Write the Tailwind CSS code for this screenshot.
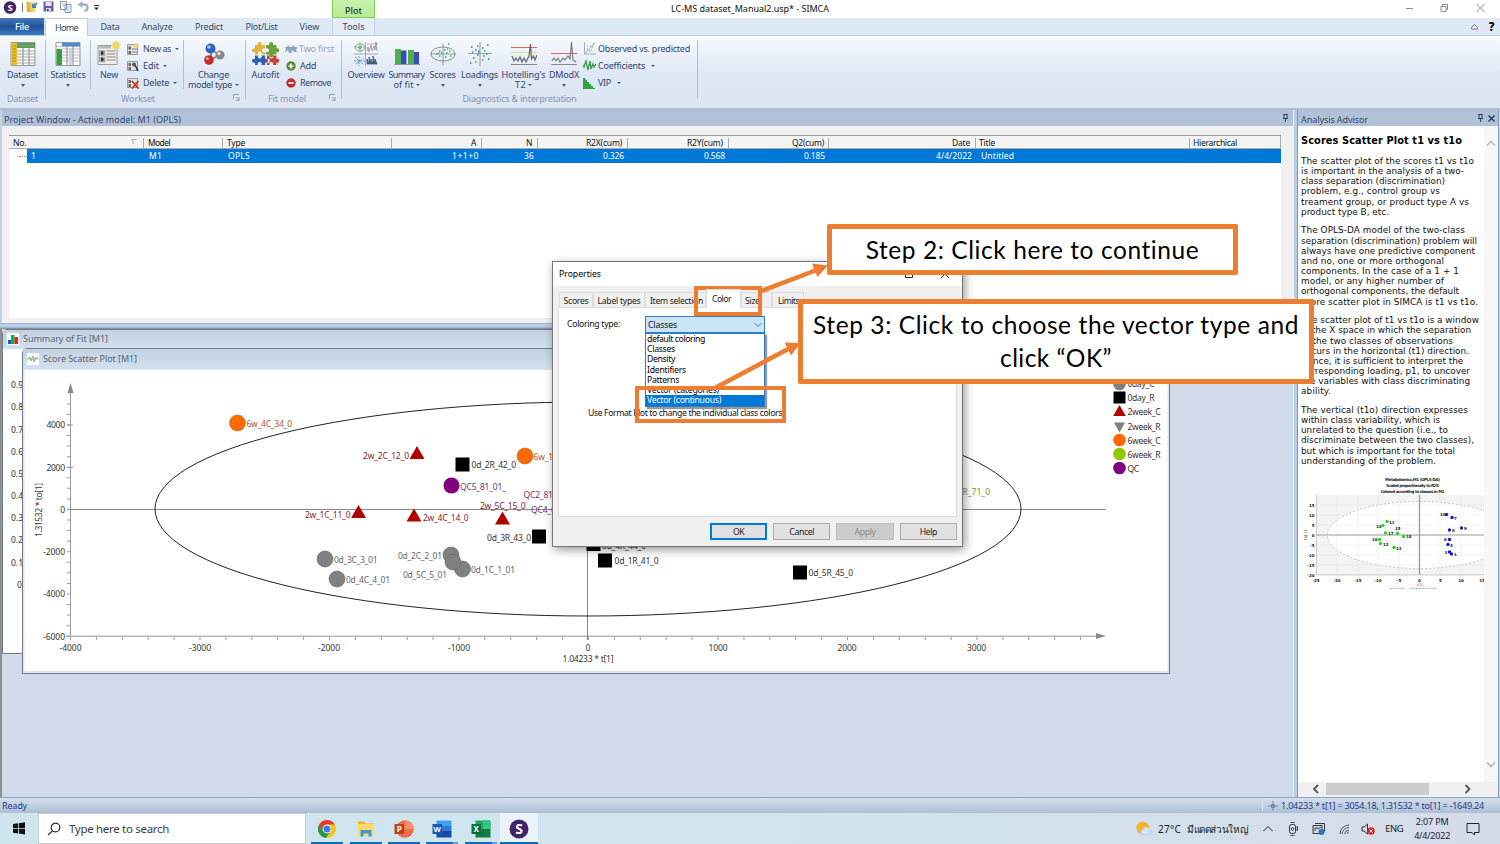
<!DOCTYPE html>
<html lang="en">
<head>
<meta charset="utf-8">
<title>LC-MS dataset_Manual2.usp* - SIMCA</title>
<script src="https://cdn.jsdelivr.net/npm/@tailwindcss/browser@4"></script>
</head>
<body class="w-[1500px] h-[844px] overflow-hidden bg-[#d0dae9] text-[9px] leading-[10px] text-[#111] whitespace-nowrap font-['Noto_Sans','Open_Sans',sans-serif]">
<div class="relative w-[1500px] h-[844px] flex flex-col overflow-hidden">

<!-- Title bar -->
<header class="h-[18px] shrink-0 bg-white flex items-center">
  <div class="w-[332px] flex items-center h-full">
    <svg class="w-[332px] h-[18px]" viewBox="0 0 332 18">
      <circle cx="10" cy="7.500" r="6.300" fill="#43246b"/><text x="10" y="11" font-size="9.500" font-weight="700" fill="#fff" text-anchor="middle">S</text>
      <path d="M22.500 3v9" stroke="#777"/>
      <path d="M27 2h8v10h-8z" fill="#f0cf73"/><path d="M26.500 1l4 2v10l-4-2z" fill="#e3b443"/><path d="M37 3l-4 4m0-3v3h3" stroke="#2d87c8" stroke-width="1.800" fill="none"/>
      <path d="M43.500 1.500h10v10h-10z" fill="#6d5aa5"/><path d="M45.500 2h6v4h-6z" fill="#e8e6f2"/><path d="M46 8h5v3.500h-5z" fill="#d5d1e6"/><path d="M47 9h1.500v2h-1.500z" fill="#443377"/>
      <path d="M60.500 1.500h6v8h-6zM65 4.500h6v8h-6z" fill="#fff" stroke="#8796a8"/><path d="M62 4h3M62 6h2M66.500 7h3M66.500 9h3M66.500 11h3" stroke="#8fa5c3" stroke-width=".7"/>
      <path d="M80.500 4.500h4q3 0 3 3t-3 3.500" stroke="#9fb1cc" stroke-width="2.300" fill="none"/><path d="M82.500 1v7l-5-3.500z" fill="#9fb1cc"/>
      <path d="M94 5.500h5" stroke="#333"/><path d="M94 7.500h5l-2.500 2.500z" fill="#222"/>
    </svg>
  </div>
  <div class="w-[43px] h-[18px] border border-t-0 border-[#7fd052] bg-gradient-to-b from-[#c9f1ad] to-[#b6eb93] text-center pt-[6px]"><span data-w="17" class="font-medium text-[#234]">Plot</span></div>
  <div class="w-[296px]"></div>
  <div class="w-[735px]"><span data-w="158" class="text-[#111]">LC-MS dataset_Manual2.usp* - SIMCA</span></div>
  <svg class="w-[94px] h-[18px]" viewBox="1406 0 94 18" fill="none" stroke="#8d8d8d"><path d="M1406 8.500h7M1441 6.500h5v5h-5zM1442.500 6v-1.500h5v5h-1.500M1476.500 4l8 8m0-8l-8 8"/></svg>
</header>

<!-- Ribbon tabs -->
<nav class="h-[18px] shrink-0 bg-[#dfe9f5] border-b border-[#b9cde0] flex items-end text-[#33486b]">
  <div class="w-[44px] h-[17px] bg-gradient-to-b from-[#4478b8] via-[#20549a] to-[#3f7ac0] text-white text-center pt-[4px]"><span data-w="14" class="font-medium">File</span></div>
  <div class="w-[43px] ml-[1px] h-[18px] -mb-px bg-white border border-b-0 border-[#b9cde0] rounded-t-[2px] text-center pt-[4px]"><span data-w="23">Home</span></div>
  <div class="w-[44px] h-[17px] text-center pt-[4px]"><span data-w="19">Data</span></div>
  <div class="w-[50px] h-[17px] text-center pt-[4px]"><span data-w="31">Analyze</span></div>
  <div class="w-[54px] h-[17px] text-center pt-[4px]"><span data-w="28">Predict</span></div>
  <div class="w-[51px] h-[17px] text-center pt-[4px]"><span data-w="32">Plot/List</span></div>
  <div class="w-[45px] h-[17px] text-center pt-[4px]"><span data-w="20">View</span></div>
  <div class="w-[43px] h-[17px] border-x border-[#c3d5e8] bg-[#e2edf6] text-center pt-[4px]"><span data-w="22">Tools</span></div>
  <div class="grow"></div>
  <svg class="w-[34px] h-[17px]" viewBox="1466 19 34 17"><path d="M1471.500 28.500l3-3 3 3v1.500h-6z" stroke="#555" fill="#eee" stroke-width=".8"/><text x="1491.500" y="31.500" text-anchor="middle" font-size="11.500" font-weight="800" fill="#000">?</text></svg>
</nav>

<!-- Ribbon -->
<section class="h-[72px] shrink-0 bg-gradient-to-b from-[#f7fbff] via-[#dfe9f5] to-[#dce6f4] flex text-[#30456b]">
  <div class="w-[45px] pt-[5px] flex flex-col">
    <div class="h-[53px] flex flex-col items-center">
      <svg class="w-[26px] h-[26px]" viewBox="0 0 26 26"><path d="M1 1.500h24v23H1z" fill="#fafafa" stroke="#9a9a9a"/><path d="M7 2h18v5H7z" fill="#4da64b"/><path d="M1.500 2h5.500v22H1.500z" fill="#e8bd26"/><path d="M7 10h18M7 13h18M7 16h18M7 19h18M7 22h18M7 4.500h18" stroke="#999" stroke-width=".8"/><path d="M13 2v22M19 2v22" stroke="#888" stroke-width="1"/><path d="M2 5h4M2 8h4M2 11h4M2 14h4M2 17h4M2 20h4" stroke="#b58f12" stroke-width=".8"/></svg>
      <span data-w="31" class="mt-[3px]">Dataset</span><span class="mt-[4px] border-x-[2.500px] border-x-transparent border-t-[3px] border-t-[#46587a]"></span>
    </div>
    <div class="text-center text-[#8794ab]"><span data-w="31">Dataset</span></div>
  </div>
  <div class="w-px h-[59px] mt-[4px] bg-[#b3c0d2]"></div>
  <div class="w-[199px] pt-[5px] flex flex-col">
    <div class="h-[53px] flex">
      <div class="w-[44px] flex flex-col items-center">
        <svg class="w-[26px] h-[26px]" viewBox="0 0 26 26"><path d="M1 1.500h24v23H1z" fill="#fafafa" stroke="#9a9a9a"/><path d="M7 2h18v3.500H7z" fill="#3f8ee4"/><path d="M1.500 8h5.500v16H1.500z" fill="#3a9d45"/><path d="M1 5.500h24M7 8h18M7 11h18M7 14h18M7 17h18M7 20h18" stroke="#aaa" stroke-width=".7"/><path d="M12 2v22M18 2v22" stroke="#888"/><path d="M14 7h3v17h-3z" fill="#cbd4e2"/></svg>
        <span data-w="35" class="mt-[3px]">Statistics</span><span class="mt-[4px] border-x-[2.500px] border-x-transparent border-t-[3px] border-t-[#46587a]"></span>
      </div>
      <div class="w-px h-[49px] -mt-px bg-[#b3c0d2]"></div>
      <div class="w-[36px] flex flex-col items-center">
        <svg class="w-[26px] h-[26px]" viewBox="0 0 26 26"><path d="M2 4.500h19v19H2z" fill="#eee" stroke="#9a9a9a"/><path d="M2.500 5H15v2.500H2.500z" fill="#bbb"/><path d="M10.500 10h9M10.500 13h9M10.500 16h9M10.500 19h9" stroke="#888"/><path d="M3.500 9.500h5.500v5H3.500zM3.500 16h5.500v5H3.500z" fill="#bbb" stroke="#888" stroke-width=".5"/><ellipse cx="6.200" cy="12" rx="1.500" ry="2" fill="#333"/><ellipse cx="6.200" cy="18.500" rx="1.500" ry="2" fill="#333"/><path d="M20 0v9M15.500 4.500h9M17 1.500l6 6m0-6l-6 6" stroke="#f3d666" stroke-width="2"/></svg>
        <span data-w="18" class="mt-[3px]">New</span>
      </div>
      <div class="w-[56px] flex flex-col -mt-px">
        <div class="h-[17px] flex items-center gap-[4px]"><svg class="w-[12px] h-[12px] shrink-0" viewBox="0 0 12 12"><path d="M.5 1.500h10v10H.5z" fill="#e3e3e3" stroke="#999"/><path d="M1.500 3.500h2.500v3H1.500zM1.500 8h2.500v3H1.500z" fill="#666"/><path d="M5 6h5M5 9h5" stroke="#888"/><path d="M9.500 0v5M7 2.500h5" stroke="#f3d666" stroke-width="2"/></svg><span data-w="28">New as</span><span class="border-x-[2px] border-x-transparent border-t-[2.500px] border-t-[#46587a]"></span></div>
        <div class="h-[17px] flex items-center gap-[4px]"><svg class="w-[12px] h-[12px] shrink-0" viewBox="0 0 12 12"><path d="M.5 1.500h10v9H.5z" fill="#e3e3e3" stroke="#999"/><path d="M1.500 3h2.500v3H1.500zM1.500 7h2.500v3H1.500z" fill="#666"/><path d="M8 5l3 6" stroke="#333" stroke-width="1.500" fill="none"/><circle cx="7" cy="4.500" r="2" fill="#555"/></svg><span data-w="16">Edit</span><span class="border-x-[2px] border-x-transparent border-t-[2.500px] border-t-[#46587a]"></span></div>
        <div class="h-[17px] flex items-center gap-[4px] pt-px"><svg class="w-[12px] h-[12px] shrink-0" viewBox="0 0 12 12"><path d="M.5 1.500h10v9H.5z" fill="#e3e3e3" stroke="#999"/><path d="M1.500 3h2.500v3H1.500zM1.500 7h2.500v3H1.500z" fill="#666"/><path d="M5 4l6.500 7.500m0-7.500l-6.500 7.500" stroke="#c9321e" stroke-width="1.800"/></svg><span data-w="26">Delete</span><span class="border-x-[2px] border-x-transparent border-t-[2.500px] border-t-[#46587a]"></span></div>
      </div>
      <div class="w-px h-[49px] -mt-px bg-[#b3c0d2]"></div>
      <div class="w-[59px] flex flex-col items-center">
        <svg class="w-[26px] h-[26px]" viewBox="0 0 26 26"><path d="M10 8l8 6-8 5z" fill="none" stroke="#888" stroke-width="2"/><circle cx="9.500" cy="7.500" r="5" fill="#2b63c0"/><circle cx="8" cy="6" r="1.800" fill="#a9c8f2"/><circle cx="19" cy="14" r="4.500" fill="#888"/><circle cx="18" cy="12.500" r="1.600" fill="#eee"/><circle cx="8" cy="19" r="4.800" fill="#c42a2a"/><circle cx="6.500" cy="17.500" r="1.500" fill="#f3a5a5"/></svg>
        <span data-w="31" class="mt-[3px]">Change</span>
        <div class="flex items-center gap-[3px]"><span data-w="44">model type</span><span class="border-x-[2px] border-x-transparent border-t-[2.500px] border-t-[#46587a]"></span></div>
      </div>
    </div>
    <div class="flex text-[#8794ab] pr-[5px]"><span class="w-[75px]"></span><span data-w="34">Workset</span><span class="grow"></span><svg class="w-[7px] h-[8px]" viewBox="0 0 7 8" fill="none" stroke="#8290a8"><path d="M.5 5V.5H6M3 3l3 3M6 3v3.500H3" stroke-width=".8"/></svg></div>
  </div>
  <div class="w-px h-[59px] mt-[4px] bg-[#b3c0d2]"></div>
  <div class="w-[95px] pt-[5px] flex flex-col">
    <div class="h-[53px] flex">
      <div class="w-[39px] flex flex-col items-center">
        <svg class="w-[27px] h-[26px]" viewBox="0 0 27 26"><path d="M3 4h3a2 2 0 1 1 3.500 0H13v3.500a2 2 0 1 0 0 3.500v2.500H9.500a2 2 0 1 0-3.500 0H3V11a2 2 0 1 1 0-3.500z" fill="#e2b33c"/><path d="M14 4h3.500a2 2 0 1 1 3.500 0h3.500v3.500a2 2 0 1 1 0 3.500v2.500H21a2 2 0 1 1-3.500 0H14V11a2 2 0 1 0 0-3.500z" fill="#6aa338"/><path d="M3 14.500h3a2 2 0 1 0 3.500 0H13V18a2 2 0 1 1 0 3.500V24H9.500a2 2 0 1 0-3.500 0H3v-2.500a2 2 0 1 1 0-3.500z" fill="#345fae"/><path d="M15 14.500h2.500a2 2 0 1 0 3.500 0h3.500V18a2 2 0 1 1 0 3.500V24H21a2 2 0 1 0-3.500 0H15v-2.500a2 2 0 1 0 0-3.500z" fill="#cb4037"/></svg>
        <span data-w="28" class="mt-[3px]">Autofit</span>
      </div>
      <div class="w-[56px] flex flex-col -mt-px">
        <div class="h-[17px] flex items-center gap-[2px] text-[#98a3b7]"><svg class="w-[12px] h-[10px] shrink-0" viewBox="0 0 12 10"><path d="M0 3h2l1-2 2 2h2l1-2 2 2h2v2l-1 1 1 2H9L8 6 6 9H4L3 6 1 8H0l1-3z" fill="#93a4be"/></svg><span data-w="35">Two first</span></div>
        <div class="h-[17px] flex items-center gap-[4px]"><svg class="w-[10px] h-[10px] shrink-0 ml-px" viewBox="0 0 10 10"><circle cx="5" cy="5" r="4.700" fill="#57892f"/><path d="M5 2.500v5M2.500 5h5" stroke="#fff" stroke-width="1.700"/></svg><span data-w="16">Add</span></div>
        <div class="h-[17px] flex items-center gap-[4px] pt-px"><svg class="w-[10px] h-[10px] shrink-0 ml-px" viewBox="0 0 10 10"><circle cx="5" cy="5" r="4.700" fill="#c02c2c"/><path d="M2.500 5h5" stroke="#fff" stroke-width="1.700"/></svg><span data-w="31">Remove</span></div>
      </div>
    </div>
    <div class="flex text-[#8794ab] pr-[5px]"><span class="w-[22px]"></span><span data-w="38">Fit model</span><span class="grow"></span><svg class="w-[7px] h-[8px]" viewBox="0 0 7 8" fill="none" stroke="#8290a8"><path d="M.5 5V.5H6M3 3l3 3M6 3v3.500H3" stroke-width=".8"/></svg></div>
  </div>
  <div class="w-px h-[59px] mt-[4px] bg-[#b3c0d2]"></div>
  <div class="w-[355px] pt-[5px] flex flex-col">
    <div class="h-[53px] flex">
      <div class="w-[48px] flex flex-col items-center">
        <svg class="w-[26px] h-[26px]" viewBox="0 0 26 26" fill="none"><path d="M12.500 1v24M1 13h24M7 1v11M1 6h11" stroke="#999" stroke-width=".8"/><ellipse cx="7" cy="6.500" rx="5" ry="3.500" stroke="#6aa36a" stroke-width=".8"/><circle cx="7" cy="6.500" r="1.800" fill="#6bb96b"/><path d="M14 3h11" stroke="#e99"/><path d="M14 10l1-4 1 5 2-7 1 6 2-5 1 4 1-8 1 9" stroke="#999" stroke-width=".9"/><path d="M2 16l9 8M3 23l8-6M6 15v10M1 20h11" stroke="#5a9ad0" stroke-dasharray="2 1"/><path d="M14 23v-5l2 5v-7l2 7v-5l2 5v-8l2 8v-5l2 5z" fill="#3a9d45" stroke="#347" stroke-width=".7"/></svg>
        <span data-w="37" class="mt-[3px]">Overview</span>
      </div>
      <div class="w-[33px] flex flex-col items-center">
        <svg class="w-[26px] h-[26px]" viewBox="0 0 26 26"><path d="M1 8h6v15H1zM14 9h6v14h-6z" fill="#4caf50"/><path d="M7 9.500h5.500V23H7zM20 11h5v12h-5z" fill="#3b4db5"/><path d="M0 23.500h26" stroke="#999"/></svg>
        <span data-w="36" class="mt-[3px]">Summary</span>
        <div class="flex items-center gap-[2px]"><span data-w="20">of fit</span><span class="border-x-[2px] border-x-transparent border-t-[2.500px] border-t-[#46587a]"></span></div>
      </div>
      <div class="w-[39px] flex flex-col items-center">
        <svg class="w-[26px] h-[26px]" viewBox="0 0 26 26" fill="none"><ellipse cx="13" cy="13" rx="12" ry="7" stroke="#777" stroke-width=".8"/><path d="M13 2v22M0 13h26" stroke="#888" stroke-width=".8"/><path d="M6 13h1.500M9 10h1.500M9 15h1.500M14 9h1.500M16 12h1.500M19 10h1.500M15 16h1.500M20 15h1.500M11 12h1.500M18 3h1.500M8 12h1M17 8h1" stroke="#3daf4a" stroke-width="1.500"/></svg>
        <span data-w="26" class="mt-[3px]">Scores</span><span class="mt-[4px] border-x-[2.500px] border-x-transparent border-t-[3px] border-t-[#46587a]"></span>
      </div>
      <div class="w-[35px] flex flex-col items-center">
        <svg class="w-[26px] h-[26px]" viewBox="0 0 26 26" fill="none"><path d="M13 1v24M1 12.500h24" stroke="#888" stroke-width=".8"/><path d="M4 6h1.500M8 9h1.500M15 7h1.500M20 4h1.500M10 14h1.500M16 15h1.500M21 18h1.500M6 17h1.500M3 22h1.500M11 10h1.500" stroke="#3f6fe0" stroke-width="1.500"/><path d="M10 5h1.500M17 10h1.500M15 19h1.500M8 21h1.500M11 12h1.500M19 13h1.500M5 11h1.500" stroke="#3daf4a" stroke-width="1.500"/></svg>
        <span data-w="37" class="mt-[3px]">Loadings</span><span class="mt-[4px] border-x-[2.500px] border-x-transparent border-t-[3px] border-t-[#46587a]"></span>
      </div>
      <div class="w-[53px] flex flex-col items-center">
        <svg class="w-[26px] h-[26px]" viewBox="0 0 26 26" fill="none"><path d="M0 6.500h26" stroke="#e96060"/><path d="M0 11.500h26" stroke="#e2d98a"/><path d="M1 15l2 5 2-3 2 3 2-4 2 5 2-4 2 4 3-6 1.500-12 1 15 2-3 1.500 4 2-5" stroke="#666" stroke-width="1.200"/><path d="M0 23.500h26" stroke="#888"/></svg>
        <span data-w="44" class="mt-[3px]">Hotelling's</span>
        <div class="flex items-center gap-[2px]"><span data-w="11">T2</span><span class="border-x-[2px] border-x-transparent border-t-[2.500px] border-t-[#46587a]"></span></div>
      </div>
      <div class="w-[28px] flex flex-col items-center">
        <svg class="w-[26px] h-[26px] shrink-0" viewBox="0 0 26 26" fill="none"><path d="M0 12.500h26" stroke="#e96060"/><path d="M1 20l2-3 2 3 2-3 2 4 3-4 2 2 3-4 2 3 1.500-17 1.500 18 3 2" stroke="#777" stroke-width="1.100"/><path d="M0 23.500h26" stroke="#888"/></svg>
        <span data-w="30" class="mt-[3px]">DModX</span><span class="mt-[4px] border-x-[2.500px] border-x-transparent border-t-[3px] border-t-[#46587a]"></span>
      </div>
      <div class="flex flex-col pl-[5px] -mt-px">
        <div class="h-[17px] flex items-center gap-[2px]"><svg class="w-[13px] h-[13px] shrink-0" viewBox="0 0 13 13" fill="none"><path d="M1.500 0v12H13M1.500 12L12 1" stroke="#999" stroke-width=".8"/><path d="M4 7h1M7 4h1M9 5h1M6 9h1M4 4h1M10 2h1M8 8h1" stroke="#45a852" stroke-width="1.200"/></svg><span data-w="92">Observed vs. predicted</span></div>
        <div class="h-[17px] flex items-center gap-[2px]"><svg class="w-[13px] h-[13px] shrink-0" viewBox="0 0 13 13" fill="none"><path d="M0 6l1 2 2-6 2 9 2-9 1 8 2-5 1 3 2-3" stroke="#36a044" stroke-width="1.300"/></svg><span data-w="47">Coefficients</span><span class="ml-[4px] border-x-[2px] border-x-transparent border-t-[2.500px] border-t-[#46587a]"></span></div>
        <div class="h-[17px] flex items-center gap-[2px] pt-px"><svg class="w-[13px] h-[13px] shrink-0" viewBox="0 0 13 13"><path d="M0 1h2l1 2h1v2h2v2h2v2h2v2h2v1H0z" fill="#36a044"/></svg><span data-w="13">VIP</span><span class="ml-[4px] border-x-[2px] border-x-transparent border-t-[2.500px] border-t-[#46587a]"></span></div>
      </div>
    </div>
    <div class="text-center text-[#8794ab]"><span data-w="114">Diagnostics &amp; interpretation</span></div>
  </div>
  <div class="w-px h-[59px] mt-[4px] bg-[#b3c0d2]"></div>
</section>

<!-- Work area -->
<main class="h-[689px] shrink-0 flex border-t-2 border-[#aebdd0]">
  <div class="w-[1293px] flex flex-col">
    <!-- Project window -->
    <section class="h-[213px] shrink-0 bg-[#f0f0f0] border-l-2 border-[#c2d3e8] flex flex-col">
      <div class="h-[16px] bg-[#b1c2d8] flex items-center pl-[2px] pr-[4px] text-[#33486b]"><span data-w="177" class="pt-[3px]">Project Window - Active model: M1 (OPLS)</span><span class="grow"></span><svg class="w-[7px] h-[9px]" viewBox="0 0 7 9" fill="none" stroke="#1d3557" stroke-width=".9"><path d="M2 0v4.500M5 0v4.500M1.500.5h4M1 4.500h5M3.500 5v3"/></svg></div>
      <div class="ml-[7px] mt-[9px] w-[1272px] h-[183px] bg-white border-t border-[#999] flex flex-col">
        <div class="h-[13px] pt-px bg-[#f4f4f4] border-b border-r border-[#aaa] flex items-center text-[8.500px] [&>div]:h-[10px] [&>div]:border-[#aaa] [&>div]:shrink-0">
          <div class="w-[135px] border-r pl-[4px] pr-[6px] flex justify-between"><span data-w="13">No.</span><svg class="w-[6px] h-[8px]" viewBox="0 0 6 8"><path d="M.5 1.500h5M1 2l2 4" stroke="#aaa" fill="none"/></svg></div>
          <div class="w-[79px] border-r pl-[4px]"><span data-w="22">Model</span></div>
          <div class="w-[169px] border-r pl-[4px]"><span data-w="18">Type</span></div>
          <div class="w-[90px] border-r text-right pr-[5px]"><span data-w="5">A</span></div>
          <div class="w-[56px] border-r text-right pr-[5px]"><span data-w="6">N</span></div>
          <div class="w-[90px] border-r text-right pr-[5px]"><span data-w="36">R2X(cum)</span></div>
          <div class="w-[101px] border-r text-right pr-[5px]"><span data-w="36">R2Y(cum)</span></div>
          <div class="w-[100px] border-r text-right pr-[4px]"><span data-w="32">Q2(cum)</span></div>
          <div class="w-[147px] border-r text-right pr-[5px]"><span data-w="18">Date</span></div>
          <div class="w-[214px] border-r pl-[3px]"><span data-w="16">Title</span></div>
          <div class="pl-[3px]"><span data-w="44">Hierarchical</span></div>
        </div>
        <div class="h-[14px] flex text-white text-[8.500px]">
          <div class="w-[18px] flex items-center pl-[10px]"><span class="w-[8px] border-t border-dotted border-[#888]"></span></div>
          <div class="grow bg-[#0078d7] flex pt-[2px] [&>div]:shrink-0">
            <div class="w-[122px] pl-[4px]">1</div>
            <div class="w-[79px]"><span data-w="13">M1</span></div>
            <div class="w-[161px]"><span data-w="22">OPLS</span></div>
            <div class="w-[98px] text-right pr-[8px]"><span data-w="27">1+1+0</span></div>
            <div class="w-[56px] text-right pr-[9px]"><span data-w="10">36</span></div>
            <div class="w-[90px] text-right pr-[9px]"><span data-w="21">0.326</span></div>
            <div class="w-[101px] text-right pr-[9px]"><span data-w="21">0.568</span></div>
            <div class="w-[100px] text-right pr-[9px]"><span data-w="21">0.185</span></div>
            <div class="w-[138px] text-right"><span data-w="36">4/4/2022</span></div>
            <div class="pl-[9px]"><span data-w="33">Untitled</span></div>
          </div>
        </div>
      </div>
    </section>
    <div class="h-[5px] bg-[#b8cde6] border-y border-[#a3b6d0]"></div>

    <!-- MDI workspace -->
    <section class="relative grow bg-[#d0dae9] border-l-2 border-t border-[#8f8f8f] overflow-hidden">
      <div class="absolute left-0 top-0 w-[1164px] h-[325px] bg-white border border-[#6e7b88] rounded-tl-[5px]">
        <div class="h-[19px] bg-gradient-to-b from-[#c3d2e1] to-[#d3e0ee] flex items-center pl-[4px] gap-[4px] text-[#5a6572] pb-px"><svg class="w-[12px] h-[12px]" viewBox="0 0 12 12"><path d="M0 0h12v12H0z" fill="#fff"/><path d="M1 7h3v4H1z" fill="#1461d2"/><path d="M4 2h3.500v9H4z" fill="#0ab443"/><path d="M7.500 4H11v7H7.500z" fill="#e02525"/></svg><span data-w="85">Summary of Fit [M1]</span></div>
        <svg class="w-[20px] h-[304px]" viewBox="3 349 20 304" font-size="8.500" fill="#333"><text x="11" y="387.500">0.9</text><text x="11" y="409.500">0.8</text><text x="11" y="432.500">0.7</text><text x="11" y="454.500">0.6</text><text x="11" y="477">0.5</text><text x="11" y="499">0.4</text><text x="11" y="521">0.3</text><text x="11" y="543">0.2</text><text x="11" y="565.500">0.1</text><text x="17" y="588">0</text></svg>
      </div>
      <div class="absolute left-[20px] top-[19px] w-[1148px] h-[326px] bg-white border border-[#6e7b88] rounded-tl-[5px]">
        <div class="h-[20px] bg-gradient-to-b from-[#c3d2e1] to-[#d3e0ee] flex items-center pl-[4px] gap-[4px] text-[#5a6572]"><svg class="w-[12px] h-[12px]" viewBox="0 0 12 12" fill="none"><path d="M0 0h12v12H0z" fill="#fff"/><path d="M0 6h12" stroke="#9aa" stroke-width=".7"/><path d="M1 6l2-2 1 4 2-5 1 6 2-5 2 2" stroke="#4c9f5a" stroke-width=".7"/></svg><span data-w="94">Score Scatter Plot [M1]</span></div>
        <svg class="w-[1146px] h-[304px]" viewBox="23 369 1146 304" font-size="8.500" fill="#333">
          <rect x="23.500" y="369" width="1145" height="303" fill="none" stroke="#dbe7f3" stroke-width="2"/>
          <g stroke="#9b9b9b" fill="none"><path d="M70.500 390V640"/><path d="M66 636.300H1098" stroke="#b8b8b8" stroke-width="1.600"/><path d="M70 509.500H1106M587.500 402V640" stroke="#8a8a8a"/>
            <path d="M70 638.500H1095" stroke-width="3" stroke-dasharray="1 24.900"/>
            <path d="M68.500 636.700V398" stroke-width="3" stroke-dasharray="1 9.560"/>
            <path d="M67 425H73M67 467.500H73" />
          </g>
          <path d="M70.500 383l-3 10h6zM1106 636l-10-3v6z" fill="#888"/>
          <ellipse cx="588" cy="509" rx="433" ry="107" fill="none" stroke="#222"/>
          <g text-anchor="end">
            <text x="65" y="428" textLength="18.500">4000</text><text x="65" y="470.500" textLength="18.500">2000</text><text x="65" y="512.500">0</text><text x="65" y="554.500" textLength="22">-2000</text><text x="65" y="597" textLength="22">-4000</text><text x="65" y="639.500" textLength="22">-6000</text>
          </g>
          <g text-anchor="middle">
            <text x="70.500" y="651" textLength="22">-4000</text><text x="200" y="651" textLength="22">-3000</text><text x="329" y="651" textLength="22">-2000</text><text x="459" y="651" textLength="22">-1000</text><text x="588" y="651">0</text><text x="718" y="651" textLength="19">1000</text><text x="847" y="651" textLength="19">2000</text><text x="976.500" y="651" textLength="19">3000</text>
            <text x="588" y="662" textLength="51">1.04233 * t[1]</text>
            <text transform="translate(41.500 510) rotate(-90)" textLength="54">1.31532 * to[1]</text>
          </g>
          <g fill="#ff6a00" stroke="#b56a30" stroke-width=".6"><circle cx="237.500" cy="423" r="8"/><circle cx="525" cy="456" r="8"/></g>
          <g fill="#b00000"><path d="M417 446l7.500 13h-15zM358.500 505l7.500 13h-15zM414 508.500l7.500 13h-15zM502.500 511.500l7.500 13h-15z"/></g>
          <g fill="#000"><path d="M455.500 457.500h14v14h-14zM532 529.500h14v14h-14zM586.500 537h14v14h-14zM598 553.500h14v14h-14zM793 565.500h14v14h-14z"/></g>
          <g fill="#808080" stroke="#666" stroke-width=".6"><circle cx="325" cy="559" r="8"/><circle cx="337" cy="579" r="8"/><circle cx="451" cy="555" r="8"/><circle cx="462.500" cy="569" r="8"/><circle cx="453" cy="562" r="8"/></g>
          <circle cx="451.500" cy="485.500" r="8" fill="#800080"/>
          <g fill="#b8561c"><text x="246.500" y="426.500" textLength="45.500">6w_4C_34_0</text><text x="533.500" y="459.500" textLength="46">6w_1C_31_0</text></g>
          <g fill="#8a2222"><text x="363" y="459" textLength="46">2w_2C_12_0</text><text x="305" y="517.500" textLength="45.500">2w_1C_11_0</text><text x="423" y="520.500" textLength="45.500">2w_4C_14_0</text><text x="480" y="509" textLength="45.500">2w_5C_15_0</text></g>
          <g fill="#333"><text x="471.500" y="468" textLength="44.500">0d_2R_42_0</text><text x="487" y="540.500" textLength="44">0d_3R_43_0</text><text x="602" y="548.500" textLength="44">0d_4R_44_0</text><text x="614.500" y="564" textLength="44">0d_1R_41_0</text><text x="808.500" y="576" textLength="44.500">0d_5R_45_0</text></g>
          <g fill="#666"><text x="334" y="562.500" textLength="43.500">0d_3C_3_01</text><text x="346" y="583" textLength="44">0d_4C_4_01</text><text x="398" y="559" textLength="44">0d_2C_2_01</text><text x="403" y="577.500" textLength="44">0d_5C_5_01</text><text x="471" y="573" textLength="44">0d_1C_1_01</text></g>
          <g fill="#6d3372"><text x="460" y="489.500" textLength="46">QC5_81_01_</text><text x="523.500" y="497.500" textLength="46">QC2_81_01_</text><text x="531" y="513" textLength="46">QC4_61_01_</text></g>
          <text x="947" y="494.500" textLength="43" fill="#80962a">6w_R_71_0</text>
          <circle cx="1119.500" cy="384" r="6.300" fill="#808080"/><path d="M1113.500 391.500h12v12h-12z" fill="#000"/><path d="M1119.500 405l6.300 11h-12.600z" fill="#b00000"/><path d="M1119.500 432.500l5.500-10h-11z" fill="#808080"/><circle cx="1119.500" cy="440" r="6.300" fill="#ff6a00"/><circle cx="1119.500" cy="454" r="6.300" fill="#93c900"/><circle cx="1119.500" cy="468" r="6.300" fill="#800080"/>
          <text x="1127.500" y="387" textLength="27">0day_C</text><text x="1127.500" y="401" textLength="27">0day_R</text><text x="1127.500" y="415" textLength="33">2week_C</text><text x="1127.500" y="429.500" textLength="33">2week_R</text><text x="1127.500" y="443.500" textLength="33">6week_C</text><text x="1127.500" y="457.500" textLength="33">6week_R</text><text x="1127.500" y="471.500" textLength="11.500">QC</text>
        </svg>
      </div>
    </section>
  </div>
  <div class="w-[4px] bg-[#b8cde6] border-l border-[#e6eef8]"></div>

  <!-- Analysis Advisor -->
  <aside class="w-[202px] bg-white border-x border-b border-[#7c98b8] flex flex-col">
    <div class="h-[16px] shrink-0 bg-[#b1c2d8] flex items-center pl-[3px] pr-[3px] text-[#33486b]"><span data-w="67" class="pt-[3px]">Analysis Advisor</span><span class="grow"></span><svg class="w-[20px] h-[9px]" viewBox="0 0 20 9" fill="none" stroke="#1d3557"><path d="M4 0v4.500M7 0v4.500M3.500.5h4M3 4.500h5M5.500 5v3" stroke-width=".9"/><path d="M13.500 1.500l6 6m0-6l-6 6" stroke-width="1.300"/></svg></div>
    <div class="grow flex">
      <div class="w-[186px] pl-[3px] pt-[9px] overflow-hidden font-['DejaVu_Sans',sans-serif] text-[8.900px] leading-[10.150px] [&_span]:block [&_span]:w-fit">
        <h1 class="font-bold text-[9.800px] leading-[12px] text-black"><span data-w="161">Scores Scatter Plot t1 vs t1o</span></h1>
        <p class="mt-[9px]"><span data-w="173">The scatter plot of the scores t1 vs t1o</span><span data-w="163">is important in the analysis of a two-</span><span data-w="144">class separation (discrimination)</span><span data-w="139">problem, e.g., control group vs</span><span data-w="168">treament group, or product type A vs</span><span data-w="88">product type B, etc.</span></p>
        <p class="mt-[8.500px]"><span data-w="164">The OPLS-DA model of the two-class</span><span data-w="176">separation (discrimination) problem will</span><span data-w="174">always have one predictive component</span><span data-w="143">and no, one or more orthogonal</span><span data-w="158">components. In the case of a 1 + 1</span><span data-w="143">model, or any higher number of</span><span data-w="158">orthogonal components, the default</span><span data-w="177">score scatter plot in SIMCA is t1 vs t1o.</span></p>
        <p class="mt-[8.500px]"><span data-w="178">The scatter plot of t1 vs t1o is a window</span><span data-w="170">in the X space in which the separation</span><span data-w="152">of the two classes of observations</span><span data-w="168">occurs in the horizontal (t1) direction.</span><span data-w="162">Hence, it is sufficient to interpret the</span><span data-w="169">corresponding loading, p1, to uncover</span><span data-w="169">the variables with class discriminating</span><span data-w="30">ability.</span></p>
        <p class="mt-[8.500px]"><span data-w="167">The vertical (t1o) direction expresses</span><span data-w="139">within class variability, which is</span><span data-w="147">unrelated to the question (i.e., to</span><span data-w="173">discriminate between the two classes),</span><span data-w="154">but which is important for the total</span><span data-w="135">understanding of the problem.</span></p>
        <svg class="w-[183px] h-[118px] mt-[8px]" viewBox="1301 474 183 118" font-family="DejaVu Sans, sans-serif" font-size="4">
          <g text-anchor="middle" font-weight="700" fill="#222"><text x="1412.500" y="480.500" textLength="55">Metabolomics.M1 (OPLS-DA)</text><text x="1412.500" y="486.500" textLength="53">Scaled proportionally to R2X</text><text x="1412.500" y="492.500" textLength="64">Colored according to classes in M1</text></g>
          <path d="M1316 495h168v80h-168z" fill="#f3f3f3"/>
          <clipPath id="plot"><path d="M1316 495h168v80h-168z"/></clipPath>
          <ellipse cx="1419.500" cy="535" rx="92" ry="33.500" fill="#fff" stroke="#bbb" stroke-width=".8" stroke-dasharray="2 2" clip-path="url(#plot)"/>
          <path d="M1316 505h168M1316 515h168M1316 525h168M1316 545h168M1316 555h168M1316 565h168M1337 495v80M1358 495v80M1378 495v80M1399 495v80M1440 495v80M1461 495v80" stroke="#ddd" stroke-opacity=".5" stroke-width=".7"/>
          <path d="M1316 535h168" stroke="#bbb" stroke-width="1.600"/><path d="M1419.500 495v80" stroke="#999" stroke-width="1.300"/><path d="M1316.500 495v80h168" fill="none" stroke="#bbb" stroke-width=".7"/>
          <g fill="#22d822"><circle cx="1387" cy="521.500" r="1.700"/><circle cx="1383" cy="525.500" r="1.700"/><circle cx="1385.500" cy="533" r="1.700"/><circle cx="1397.500" cy="533.500" r="1.700"/><circle cx="1403.500" cy="536.500" r="1.700"/><circle cx="1379.500" cy="539.500" r="1.700"/><circle cx="1380.500" cy="543.500" r="1.700"/><circle cx="1394" cy="547.500" r="1.700"/></g>
          <g fill="#1818d0"><circle cx="1446.500" cy="514.500" r="1.700"/><circle cx="1452" cy="517.500" r="1.700"/><circle cx="1461.500" cy="528" r="1.700"/><circle cx="1449.500" cy="530" r="1.700"/><circle cx="1449.500" cy="539.500" r="1.700"/><circle cx="1448" cy="544.500" r="1.700"/><circle cx="1449.500" cy="552" r="1.700"/><circle cx="1451.500" cy="554" r="1.700"/></g>
          <g fill="#222" font-weight="700"><text x="1389" y="523.500">11</text><text x="1376" y="527.500">14</text><text x="1388" y="534.500">17</text><text x="1395" y="530">15</text><text x="1406" y="538">18</text><text x="1372" y="541">16</text><text x="1383" y="545.500">12</text><text x="1396" y="549.500">13</text><text x="1440" y="516">10</text><text x="1454" y="519.500">7</text><text x="1464" y="529.500">9</text><text x="1452" y="531.500">8</text><text x="1444" y="541">6</text><text x="1450" y="546.500">4</text><text x="1444.500" y="553.500">3</text><text x="1454" y="555.500">1</text></g>
          <g fill="#111" text-anchor="end" font-weight="700"><text x="1314.500" y="506.500">15</text><text x="1314.500" y="516.500">10</text><text x="1314.500" y="526.500">5</text><text x="1314.500" y="536.500">0</text><text x="1314.500" y="546.500">-5</text><text x="1314.500" y="556.500">-10</text><text x="1314.500" y="566.500">-15</text><text x="1314.500" y="577">-20</text></g>
          <g fill="#111" text-anchor="middle" font-weight="700"><text x="1316" y="581.500">-25</text><text x="1337" y="581.500">-20</text><text x="1358" y="581.500">-15</text><text x="1378" y="581.500">-10</text><text x="1399" y="581.500">-5</text><text x="1419.500" y="581.500">0</text><text x="1440.500" y="581.500">5</text><text x="1461" y="581.500">10</text><text x="1482" y="581.500">15</text></g>
          <text transform="translate(1306.500 535) rotate(-90)" text-anchor="middle" fill="#444">to[1]</text><text x="1420" y="586" text-anchor="middle" font-size="3.500" fill="#555">t[1]</text><path d="M1390 588.500h14M1410 588.500h27" stroke="#b3b09c" stroke-dasharray="2 1"/>
        </svg>
      </div>
      <svg class="w-[14px] h-full bg-[#f7f7f7]" viewBox="1484 126 14 656" preserveAspectRatio="none" fill="none" stroke="#b5b5b5" stroke-width="1.500"><path d="M1487 145.500l4-4 4 4M1487 762.500l4 4 4-4"/></svg>
    </div>
    <div class="h-[15px] shrink-0 flex bg-[#f0f0f0]"><svg class="w-[200px] h-[15px]" viewBox="0 0 200 15" fill="none" stroke="#555" stroke-width="1.800"><path d="M28 1h103v12H28z" fill="#cdcdcd" stroke="none"/><path d="M20 3l-4 4 4 4M167.500 3l4 4-4 4"/></svg></div>
  </aside>
</main>

<!-- Status bar -->
<div class="h-[16px] shrink-0 bg-gradient-to-b from-[#d5e0ee] to-[#adbfd6] border-t border-[#8fa6c0] flex items-center text-[#1f3c88] pl-[2px]">
  <span data-w="25">Ready</span><span class="grow"></span><div class="w-[238px] flex items-center gap-[3px] border-l border-[#dbe5f1] pl-[5px]"><svg class="w-[10px] h-[10px]" viewBox="0 0 10 10" fill="none" stroke="#60748f"><path d="M0 5h10M5 0v10M3.500 3.500h3v3h-3z" stroke-width=".8"/></svg><span data-w="203">1.04233 * t[1] = 3054.18, 1.31532 * to[1] = -1649.24</span></div>
</div>

<!-- Taskbar -->
<footer class="h-[31px] shrink-0 flex items-center bg-gradient-to-r from-[#cfe5ed] via-[#d0e5ee] to-[#d6dbea] text-[#222]">
  <div class="w-[38px] flex justify-center"><svg class="w-[12px] h-[13px]" viewBox="0 0 12 13"><path d="M0 2l5-.7V6H0zM5.800 1.200L12 .3V6H5.800zM0 6.800h5v4.700l-5-.7zM5.800 6.800H12v5.700l-6.200-.9z" fill="#111"/></svg></div>
  <div class="w-[268px] h-[31px] bg-white border border-[#c9c9c9] flex items-center gap-[8px] pl-[8px] text-[11.500px] leading-[14px] text-[#3c3c3c]"><svg class="w-[14px] h-[14px]" viewBox="0 0 14 14" fill="none" stroke="#333" stroke-width="1.200"><circle cx="8.500" cy="5.500" r="4.300"/><path d="M5.500 8.700L1 13"/></svg><span data-w="100">Type here to search</span></div>
  <div class="ml-[2px] flex h-full [&>div]:w-[38.400px] [&>div]:flex [&>div]:flex-col [&>div]:items-center [&>div]:justify-between [&>div]:pt-[6px] [&_svg]:w-[20px] [&_svg]:h-[20px]">
    <div><svg viewBox="0 0 20 20"><circle cx="10" cy="10" r="9" fill="#fbc116"/><path d="M2.200 5.500A9 9 0 0 1 17.800 5.500H10L6 12z" fill="#e33b2e"/><path d="M2.200 5.500A9 9 0 0 0 9 19l4.500-7L6 12z" fill="#229a48"/><circle cx="10" cy="10" r="4.400" fill="#fff"/><circle cx="10" cy="10" r="3.500" fill="#3b7ded"/></svg><span class="w-[32px] h-[2px] bg-[#0f6cbd]"></span></div>
    <div><svg viewBox="0 0 20 20"><path d="M2 2.500h6l1.500 2H18v12H2z" fill="#f0b02a"/><path d="M2 5h16v12H2z" fill="#ffd968"/><path d="M4.500 17.500v-6.500h11v6.500h-3v-3h-5v3z" fill="#3c98d8"/></svg><span class="w-[32px] h-[2px] bg-[#0f6cbd]"></span></div>
    <div><svg viewBox="0 0 20 20"><circle cx="11" cy="10" r="8.800" fill="#ed6c47"/><path d="M11 1.200A8.800 8.800 0 0 1 19.800 10H11z" fill="#ff8f6b"/><path d="M0.500 5h9.500v10H.5z" fill="#c43e1c"/><text x="5.200" y="13" text-anchor="middle" font-size="8" font-weight="700" fill="#fff">P</text></svg><span class="w-[32px] h-[2px] bg-[#0f6cbd]"></span></div>
    <div><svg viewBox="0 0 20 20"><path d="M4.500 1.500h15v5.700h-15z" fill="#41a5ee"/><path d="M4.500 7h15v5.500h-15z" fill="#2b7cd3"/><path d="M4.500 12h15v6.500h-15z" fill="#174fa5"/><path d="M.5 5H10v10H.5z" fill="#185abd"/><text x="5.200" y="12.700" text-anchor="middle" font-size="7.500" font-weight="700" fill="#fff">W</text></svg><span class="w-[32px] h-[2px] bg-[#0f6cbd] border-r-[5px] border-[#5ba2d8]"></span></div>
    <div><svg viewBox="0 0 20 20"><path d="M4.500 1.500h15v8.500h-15z" fill="#21a366"/><path d="M12 1.500h7.500V10H12z" fill="#33c481"/><path d="M4.500 10h15v8.500h-15z" fill="#107c41"/><path d="M.5 5H10v10H.5z" fill="#0e6e39"/><text x="5.200" y="13" text-anchor="middle" font-size="8" font-weight="700" fill="#fff">X</text></svg><span class="w-[32px] h-[2px] bg-[#0f6cbd] border-r-[5px] border-[#5ba2d8]"></span></div>
    <div class="bg-[#eaf3f8]"><svg viewBox="0 0 20 20"><circle cx="10" cy="10" r="9.500" fill="#43246b"/><text x="10" y="15" text-anchor="middle" font-size="14" font-weight="700" fill="#fff">S</text></svg><span class="w-[38px] h-[2px] bg-[#0f6cbd]"></span></div>
  </div>
  <div class="grow"></div>
  <div class="w-[364px] flex items-center text-[10px] leading-[14px]">
    <svg class="w-[17px] h-[17px]" viewBox="0 0 17 17"><circle cx="6.800" cy="8" r="6.500" fill="#f7b32b"/><path d="M7 14.500a2.500 2.500 0 0 1 0-5 3.500 3.500 0 0 1 6.500-.5 2.800 2.800 0 0 1 0 5.500z" fill="#cfe6fa" stroke="#9cc7ee" stroke-width=".5"/></svg>
    <span class="w-[5px]"></span><span data-w="23">27°C</span><span class="w-[6px]"></span><span data-w="60">มีแดดส่วนใหญ่</span>
    <svg class="w-[130px] h-[20px] ml-[12px]" viewBox="1260 819 130 20" fill="none" stroke="#222"><path d="M1263.500 831l4.500-4.500 4.500 4.500"/><rect x="1289.500" y="824.500" width="6" height="9" rx="2" stroke-width=".9"/><circle cx="1292.500" cy="829" r="1.300" stroke-width=".8"/><path d="M1296 827.500l1.500-1v4l-1.500-1M1290.500 822.500h4M1290.500 835.500h4" stroke-width=".8"/><path d="M1313 825.500h9v8h-9zM1315 823.500h9.500v8M1315 831v-3h3M1318 829l3-2" stroke-width=".9"/><circle cx="1321.500" cy="832" r="3" fill="#2a73c4" stroke="none"/><path d="M1340 834a9 9 0 0 1 9-9M1342 834a7 7 0 0 1 7-6.500M1344.500 834a5 5 0 0 1 4.500-4M1347 834a2.500 2.500 0 0 1 2-2" stroke="#555"/><path d="M1362 827h2l3.500-3v10l-3.500-3h-2z" stroke-width=".9"/><circle cx="1371" cy="831" r="3.700" fill="#d6262c" stroke="none"/><path d="M1369.500 829.500l3 3m0-3l-3 3" stroke="#fff"/></svg>
    <span data-w="18" class="-ml-[5px] text-[9.500px]">ENG</span>
    <div class="w-[36px] ml-[11px] text-center text-[9px]"><span data-w="33">2:07 PM</span><br><span data-w="36">4/4/2022</span></div>
    <svg class="w-[14px] h-[14px] ml-[16px]" viewBox="0 0 14 14" fill="none" stroke="#222"><path d="M1 1.500h12v9H8.500v2.500L6 10.500H1z"/></svg>
  </div>
</footer>

<!-- Properties dialog -->
<div class="absolute left-[552px] top-[261px] w-[411px] h-[286px] bg-[#f0f0f0] border border-[#777] shadow-[2px_3px_9px_rgba(0,0,0,0.4)] flex flex-col text-[8.700px]">
  <div class="h-[24px] bg-white flex items-center pl-[6px] pr-[12px] text-black"><span data-w="42">Properties</span><span class="grow"></span><svg class="w-[46px] h-[10px]" viewBox="0 0 46 10" fill="none" stroke="#222"><path d="M1.500 1.500h7v7h-7zM37 1l8 8m0-8l-8 8"/></svg></div>
  <div class="h-[21px] flex items-end pl-[6px] text-[#222] [&>div]:h-[15px] [&>div]:pt-[3px] [&>div]:text-center [&>div]:border [&>div]:border-b-0 [&>div]:border-[#dedede]">
    <div class="w-[34px]"><span data-w="25">Scores</span></div><div class="w-[52px]"><span data-w="43">Label types</span></div><div class="w-[61px] !text-left pl-[4px]"><span data-w="53">Item selection</span></div><div class="w-[35px] bg-white !h-[19px] -mb-px z-10 !text-left pl-[5px] !pt-[4px]"><span data-w="19">Color</span></div><div class="w-[31px] !text-left pl-[3px]"><span data-w="15">Size</span></div><div class="w-[32px] !text-left pl-[5px]"><span data-w="21">Limits</span></div>
  </div>
  <div class="mx-[5px] h-[210px] bg-white border border-[#dcdcdc] pl-[8px] pt-[8px]">
    <div class="flex">
      <div class="w-[78px] pt-[3px]"><span data-w="53">Coloring type:</span></div>
      <div class="w-[120px]">
        <div class="h-[17px] bg-[#cce4f7] border border-[#2f7cc2] flex items-center justify-between px-[2px]"><span data-w="29">Classes</span><svg class="w-[8px] h-[6px]" viewBox="0 0 8 6" fill="none" stroke="#6b7785"><path d="M.5 1l3.500 3.500L7.500 1"/></svg></div>
        <div class="h-[74px] bg-white border border-[#2f7cc2] shadow-[2px_2px_1px_rgba(0,0,0,0.4)] leading-[10.200px] text-black">
          <div class="pl-px"><span data-w="58">default coloring</span></div><div class="pl-px"><span data-w="28">Classes</span></div><div class="pl-px"><span data-w="28">Density</span></div><div class="pl-px"><span data-w="39">Identifiers</span></div><div class="pl-px"><span data-w="32">Patterns</span></div><div class="pl-px"><span data-w="72">Vector (categories)</span></div><div class="pl-px bg-[#0078d7] text-white h-[11px]"><span data-w="74">Vector (continuous)</span></div>
        </div>
      </div>
    </div>
    <div class="pl-[21px] pt-[1px]"><span data-w="194">Use Format Plot to change the individual class colors</span></div>
  </div>
  <div class="grow flex items-center justify-end gap-[6px] pr-[5px] text-[#222] [&>div]:w-[57.300px] [&>div]:h-[17px] [&>div]:flex [&>div]:items-center [&>div]:justify-center [&>div]:bg-[#e1e1e1]">
    <div class="border-2 border-[#0078d7]"><span data-w="11">OK</span></div><div class="border border-[#adadad]"><span data-w="25">Cancel</span></div><div class="border border-[#bfbfbf] !bg-[#cccccc] text-[#8a8a8a]"><span data-w="21">Apply</span></div><div class="border border-[#adadad]"><span data-w="17">Help</span></div>
  </div>
</div>

<!-- Tutorial annotations -->
<div class="absolute left-[694px] top-[286px] w-[68px] h-[30px] border-4 border-[#ed7d31]"></div>
<div class="absolute left-[635px] top-[386px] w-[151px] h-[37px] border-4 border-[#ed7d31]"></div>
<div class="absolute left-[827px] top-[224px] w-[411px] h-[51px] rounded-[2px] bg-white border-5 border-[#ed7d31] flex justify-center items-center text-[24.500px] leading-[33px] text-black font-['Lato',sans-serif]"><span data-w="334">Step 2: Click here to continue</span></div>
<div class="absolute left-[798px] top-[299px] w-[516px] h-[85px] rounded-[2px] bg-white border-5 border-[#ed7d31] flex flex-col items-center pt-[4px] text-[24.500px] leading-[33px] text-black font-['Lato',sans-serif]"><span data-w="486">Step 3: Click to choose the vector type and</span><span data-w="112">click “OK”</span></div>
<svg class="absolute left-0 top-0 w-[1500px] h-[844px] pointer-events-none" viewBox="0 0 1500 844"><path d="M760 291.500L818 269.500M714 388.500L790 348" stroke="#ed7d31" stroke-width="4.500"/><path d="M812 263.500l16 2-10.500 11.500zM784.500 342.500l16 .5-9.500 12.500z" fill="#ed7d31"/></svg>
</div>

<script>
/* Spread each label over the width given in data-w (pixels). */
function fitLabels() {
  var labels = Array.from(document.querySelectorAll('[data-w]'));
  labels.forEach(function (el) { el.style.letterSpacing = '0px'; });
  var widths = labels.map(function (el) {
    var range = document.createRange();
    range.selectNodeContents(el);
    return range.getBoundingClientRect().width;
  });
  labels.forEach(function (el, i) {
    el.style.letterSpacing = ((parseFloat(el.dataset.w) - widths[i]) / el.textContent.length).toFixed(3) + 'px';
  });
}
/* Measure again whenever the styles or fonts arrive after the markup. */
fitLabels();
new MutationObserver(fitLabels).observe(document.head, { childList: true, subtree: true });
new ResizeObserver(fitLabels).observe(document.body);
document.addEventListener('DOMContentLoaded', fitLabels);
window.addEventListener('load', function () {
  fitLabels();
  requestAnimationFrame(fitLabels);
  setTimeout(fitLabels, 60);
});
document.fonts.ready.then(fitLabels);
</script>
</body>
</html>
